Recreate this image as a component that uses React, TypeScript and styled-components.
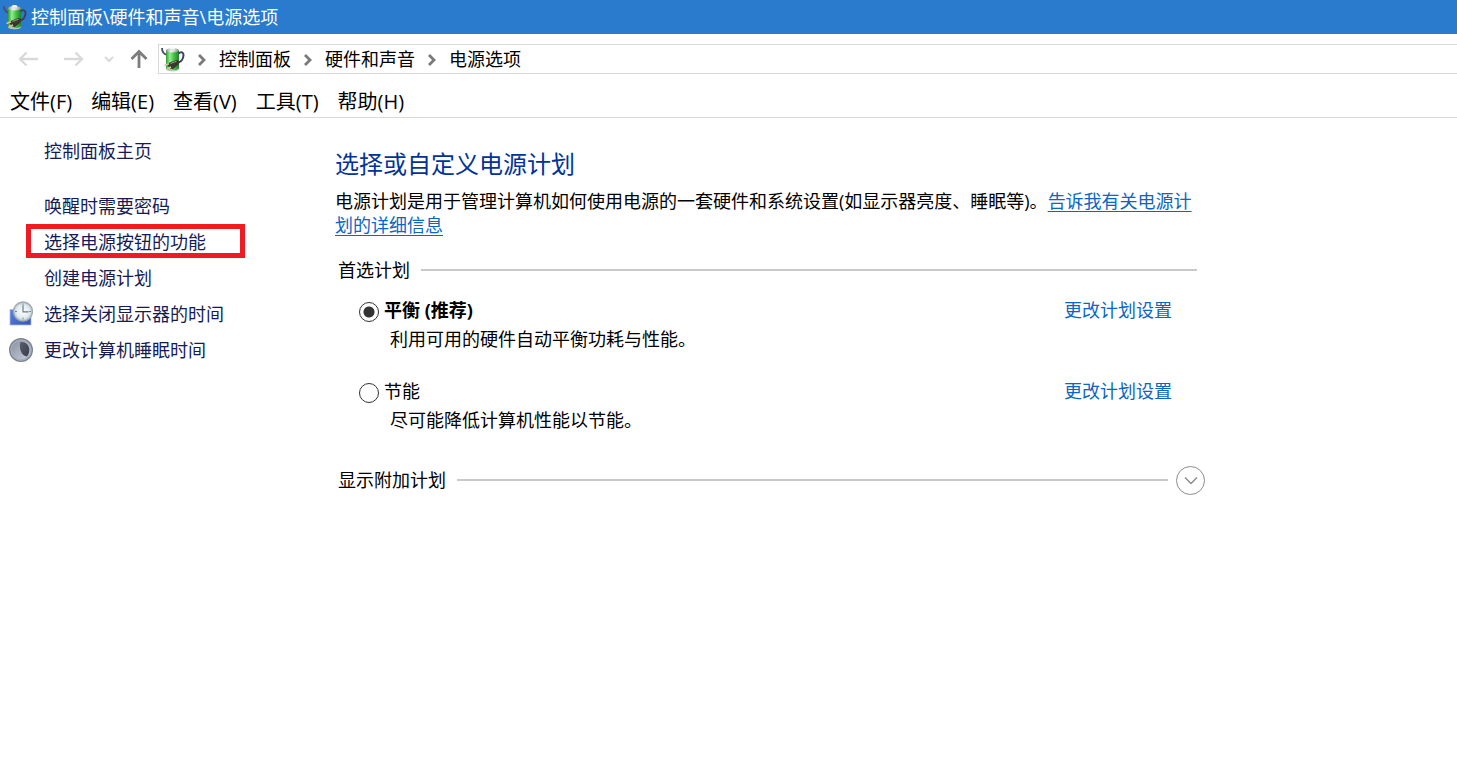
import React, { useState } from 'react';
import styled, { createGlobalStyle } from 'styled-components';

const GlobalStyle = createGlobalStyle`
  * { box-sizing: border-box; }
  body {
    margin: 0;
    background: #fff;
    color: #000;
    font-family: 'Open Sans', 'Noto Sans CJK SC', sans-serif;
    font-size: 18px;
    line-height: 24px;
  }
  a { text-decoration: none; }
  button { font: inherit; color: inherit; background: none; border: 0; padding: 0; }
  h1, h2, p, ul, ol { margin: 0; padding: 0; font-weight: 400; }
  ul, ol { list-style: none; }
`;

const Window = styled.div`
  display: flex;
  flex-direction: column;
  min-height: 100vh;
`;

const TitleBar = styled.header`
  display: flex;
  align-items: center;
  gap: 4px;
  height: 34px;
  padding-left: 3px;
  background: #2a7acd;
  color: #fff;
`;

const WindowTitle = styled.h1`
  font-size: 18px;
`;

const NavBar = styled.nav`
  display: flex;
  align-items: center;
  height: 50px;
  padding-left: 16px;
`;

const NavButton = styled.button<{ $width: number }>`
  display: flex;
  align-items: center;
  justify-content: center;
  flex: none;
  width: ${(p) => p.$width}px;
  height: 28px;
  color: #7d7d7d;
  svg { flex: none; }
  &:disabled { color: #d9d9d9; }
`;

const NavButtons = styled.div`
  display: flex;
  align-items: center;
  width: 142px;
  flex: none;
`;

const AddressBar = styled.ol`
  display: flex;
  align-items: center;
  flex: 1;
  height: 30px;
  padding-left: 2px;
  border: 1px solid #d9d9d9;
  border-right: 0;
`;

const Crumb = styled.li`
  display: flex;
  align-items: center;
  a { color: #000; }
`;

const CrumbArrow = styled.svg`
  width: 9px;
  height: 14px;
  margin: 2px 13px 0 12px;
`;

const MenuBar = styled.ul`
  display: flex;
  gap: 19px;
  height: 34px;
  padding: 4px 10px 0;
  border-bottom: 1px solid #d9d9d9;
`;

const MenuButton = styled.button`
  font-size: 20px;
  line-height: 28px;
  white-space: nowrap;
`;

const Body = styled.div`
  display: flex;
  flex: 1;
`;

const Sidebar = styled.aside`
  flex: none;
  width: 335px;
  padding: 15px 0 0 9px;
`;

const SideRow = styled.li<{ $marked?: boolean }>`
  position: relative;
  display: flex;
  align-items: center;
  height: 36px;
  ${(p) =>
    p.$marked &&
    `&::after {
      content: '';
      position: absolute;
      inset: 0 90px 2px 17px;
      border: 5px solid #ed1c24;
      pointer-events: none;
    }`}
`;

const SideIcon = styled.span`
  display: flex;
  width: 35px;
  flex: none;
`;

const SideLink = styled.a`
  color: #151c55;
  white-space: nowrap;
`;

const HomeRow = styled.div`
  display: flex;
  height: 36px;
  margin-bottom: 19px;
  padding-left: 35px;
  align-items: center;
`;

const Main = styled.main`
  flex: 0 1 870px;
  padding-top: 28px;
`;

const Heading = styled.h2`
  color: #003399;
  font-size: 24px;
  line-height: 36px;
`;

const Description = styled.p`
  padding: 7px 8px 0 0;
  line-height: 24px;
`;

const TextLink = styled.a<{ $underlined?: boolean }>`
  color: #0b66c3;
  text-decoration: ${(p) => (p.$underlined ? 'underline' : 'none')};
  text-decoration-thickness: 1px;
  text-underline-offset: 3px;
`;

const GroupHeader = styled.div<{ $top: number; $end: number }>`
  display: flex;
  align-items: center;
  gap: 11px;
  height: 30px;
  margin-top: ${(p) => p.$top}px;
  padding: 0 ${(p) => p.$end}px 0 3px;
`;

const Rule = styled.span`
  flex: 1;
  height: 2px;
  background: #c9c9c9;
`;

const Plans = styled.div`
  display: flex;
  flex-direction: column;
  gap: 23px;
  padding-top: 11px;
`;

const Plan = styled.div`
  display: grid;
  grid-template-columns: 25px 1fr auto;
  align-items: center;
  padding: 0 33px 0 24px;
`;

const Radio = styled.input`
  appearance: none;
  width: 20px;
  height: 20px;
  margin: 3px 0 0;
  border: 1px solid #333;
  border-radius: 50%;
  background: #fff;
  &:checked {
    background: radial-gradient(circle, #333 0 5px, #fff 6px);
  }
`;

const PlanName = styled.label<{ $strong?: boolean }>`
  font-weight: ${(p) => (p.$strong ? 700 : 400)};
  line-height: 28px;
`;

const PlanNote = styled.p`
  grid-column: 2 / 4;
  padding-left: 6px;
  line-height: 30px;
`;

const ExpandButton = styled.button`
  display: flex;
  align-items: center;
  justify-content: center;
  flex: none;
  width: 29px;
  height: 29px;
  margin-left: -3px;
  border: 1px solid #8c8c8c;
  border-radius: 50%;
`;

const BatterySvg = styled.svg`
  display: block;
  flex: none;
`;

function BatteryIcon({ id }: { id: string }) {
  return (
    <BatterySvg width="24" height="26" viewBox="0 0 24 26" fill="none" aria-hidden="true">
      <defs>
        <linearGradient id={`${id}-body`} x1="0" x2="1">
          <stop offset="0" stopColor="#2f9a35" />
          <stop offset="0.3" stopColor="#93ee90" />
          <stop offset="0.6" stopColor="#44c44a" />
          <stop offset="1" stopColor="#1f8229" />
        </linearGradient>
        <linearGradient id={`${id}-cap`} x1="0" x2="1">
          <stop offset="0" stopColor="#8d9690" />
          <stop offset="0.4" stopColor="#f4f8f4" />
          <stop offset="1" stopColor="#88938c" />
        </linearGradient>
      </defs>
      <path d="M1 2c0 4 1.500 6 5 7" stroke="#4a4f70" strokeWidth="1.800" />
      <path d="M5 4v18.500c0 2.600 13 2.600 13 0V4z" fill={`url(#${id}-body)`} />
      <path d="M5 21.800c0 3.200 13 3.200 13 0v1.200c0 3.200-13 3.200-13 0z" fill="#b9c4ba" />
      <ellipse cx="11.500" cy="4.300" rx="6.500" ry="2.200" fill={`url(#${id}-cap)`} />
      <path d="M8.800 2v2c0 1 5.400 1 5.400 0V2z" fill="#dfe5df" />
      <ellipse cx="11.500" cy="2" rx="2.700" ry="1" fill="#f7faf7" />
      <path d="M17.500 7.500c2.500-2.500 5.300-1 5 2-.4 3.500-2 6-5 7" stroke="#3c4162" strokeWidth="2" />
      <path d="M7.500 17l8-3 3 1-1 3.500-5.500 4.500-3-.5-2.500-3z" fill="#3a3630" />
      <path d="M9.500 17.500l6-2.300" stroke="#9a927f" strokeWidth="1.200" />
      <path d="M8 17.800l-4.500 1.700M10 21l-4 1.800" stroke="#d9c39a" strokeWidth="1.500" />
    </BatterySvg>
  );
}

function ClockIcon() {
  return (
    <svg width="24" height="26" viewBox="0 0 24 26" fill="none" aria-hidden="true">
      <defs>
        <linearGradient id="screen" x1="0" y1="0" x2="1" y2="1">
          <stop offset="0" stopColor="#5b83dc" />
          <stop offset="1" stopColor="#3556b8" />
        </linearGradient>
        <radialGradient id="dial">
          <stop offset="0" stopColor="#fff" />
          <stop offset="0.7" stopColor="#dfeaf0" />
          <stop offset="1" stopColor="#b4c3cd" />
        </radialGradient>
      </defs>
      <path d="M1 8.500h21v15.500H1z" fill="url(#screen)" stroke="#a9b9e2" strokeWidth="0.800" />
      <circle cx="14" cy="10.500" r="9.500" fill="url(#dial)" stroke="#a3abb0" strokeWidth="1.300" />
      <path d="M14 2.500v2M14 16.500v2M6 10.500h2M20 10.500h2" stroke="#7f8d97" strokeWidth="1" />
      <path d="M14 4.500v6.300h5.500" stroke="#6b7a85" strokeWidth="1.200" />
    </svg>
  );
}

function MoonIcon() {
  return (
    <svg width="24" height="24" viewBox="0 0 24 24" fill="none" aria-hidden="true">
      <defs>
        <linearGradient id="moon-face" x1="0" y1="0" x2="1" y2="1">
          <stop offset="0" stopColor="#858b9a" />
          <stop offset="1" stopColor="#ccd4e6" />
        </linearGradient>
        <linearGradient id="moon-shade" x1="0" y1="0" x2="1" y2="1">
          <stop offset="0" stopColor="#5a5e6a" />
          <stop offset="1" stopColor="#383c4c" />
        </linearGradient>
      </defs>
      <circle cx="12" cy="12" r="11.300" fill="url(#moon-face)" stroke="#7d838f" strokeWidth="1.400" />
      <circle cx="12" cy="12" r="9.900" stroke="#a5acba" strokeWidth="1.200" />
      <path d="M11.500 4c4.500-.8 8.500 2.500 8.800 7.500.1 3.500-1 5.800-2.800 7C12.500 17.500 9.500 10.500 11.500 4z" fill="url(#moon-shade)" />
    </svg>
  );
}

const crumbs = ['控制面板', '硬件和声音', '电源选项'];
const menus = ['文件(F)', '编辑(E)', '查看(V)', '工具(T)', '帮助(H)'];
const tasks = [
  { text: '唤醒时需要密码' },
  { text: '选择电源按钮的功能', marked: true },
  { text: '创建电源计划' },
  { text: '选择关闭显示器的时间', icon: <ClockIcon /> },
  { text: '更改计算机睡眠时间', icon: <MoonIcon /> },
];
const plans = [
  { id: 'balanced', name: '平衡 (推荐)', note: '利用可用的硬件自动平衡功耗与性能。' },
  { id: 'saver', name: '节能', note: '尽可能降低计算机性能以节能。' },
];

export default function App() {
  const [selected, setSelected] = useState('balanced');

  return (
    <Window>
      <GlobalStyle />
      <TitleBar>
        <BatteryIcon id="title" />
        <WindowTitle>控制面板\硬件和声音\电源选项</WindowTitle>
      </TitleBar>

      <NavBar aria-label="导航">
        <NavButtons>
          <NavButton $width={24} disabled aria-label="后退">
            <svg width="20" height="16" viewBox="0 0 20 16" fill="none" stroke="currentColor" strokeWidth="2.300">
              <path d="M20 8H2M8.500 1.500L2 8l6.500 6.500" />
            </svg>
          </NavButton>
          <NavButton $width={68} disabled aria-label="前进">
            <svg width="20" height="16" viewBox="0 0 20 16" fill="none" stroke="currentColor" strokeWidth="2.300">
              <path d="M0 8h18M11.500 1.500L18 8l-6.500 6.500" />
            </svg>
          </NavButton>
          <NavButton $width={2} disabled aria-label="最近的位置">
            <svg width="10" height="7" viewBox="0 0 10 7" fill="none" stroke="currentColor" strokeWidth="2">
              <path d="M1 1l4 4 4-4" />
            </svg>
          </NavButton>
          <NavButton $width={58} aria-label="上移">
            <svg width="18" height="20" viewBox="0 0 18 20" fill="none" stroke="currentColor" strokeWidth="2.800">
              <path d="M9 19V2.500M1.500 10L9 2.500l7.500 7.500" />
            </svg>
          </NavButton>
        </NavButtons>
        <AddressBar>
          <li>
            <BatteryIcon id="address" />
          </li>
          {crumbs.map((crumb) => (
            <Crumb key={crumb}>
              <CrumbArrow viewBox="0 0 9 14" fill="none" stroke="#7a7a7a" strokeWidth="2.800" aria-hidden="true">
                <path d="M2 2l5 5-5 5" />
              </CrumbArrow>
              <a href="#">{crumb}</a>
            </Crumb>
          ))}
        </AddressBar>
      </NavBar>

      <MenuBar>
        {menus.map((menu) => (
          <li key={menu}>
            <MenuButton>{menu}</MenuButton>
          </li>
        ))}
      </MenuBar>

      <Body>
        <Sidebar>
          <HomeRow>
            <SideLink href="#">控制面板主页</SideLink>
          </HomeRow>
          <ul>
            {tasks.map((task) => (
              <SideRow key={task.text} $marked={task.marked}>
                <SideIcon>{task.icon}</SideIcon>
                <SideLink href="#">{task.text}</SideLink>
              </SideRow>
            ))}
          </ul>
        </Sidebar>

        <Main>
          <Heading>选择或自定义电源计划</Heading>
          <Description>
            电源计划是用于管理计算机如何使用电源的一套硬件和系统设置(如显示器亮度、睡眠等)。
            <TextLink href="#" $underlined>告诉我有关电源计划的详细信息</TextLink>
          </Description>

          <GroupHeader $top={18} $end={8}>
            <span>首选计划</span>
            <Rule />
          </GroupHeader>

          <Plans>
            {plans.map((plan) => (
              <Plan key={plan.id}>
                <Radio
                  type="radio"
                  name="plan"
                  id={plan.id}
                  checked={selected === plan.id}
                  onChange={() => setSelected(plan.id)}
                />
                <PlanName htmlFor={plan.id} $strong={selected === plan.id}>{plan.name}</PlanName>
                <TextLink href="#">更改计划设置</TextLink>
                <PlanNote>{plan.note}</PlanNote>
              </Plan>
            ))}
          </Plans>

          <GroupHeader $top={30} $end={0}>
            <span>显示附加计划</span>
            <Rule />
            <ExpandButton aria-label="显示附加计划">
              <svg width="14" height="9" viewBox="0 0 14 9" fill="none" stroke="#8c8c8c" strokeWidth="1.500" aria-hidden="true">
                <path d="M1 1.500l6 6 6-6" />
              </svg>
            </ExpandButton>
          </GroupHeader>
        </Main>
      </Body>
    </Window>
  );
}
